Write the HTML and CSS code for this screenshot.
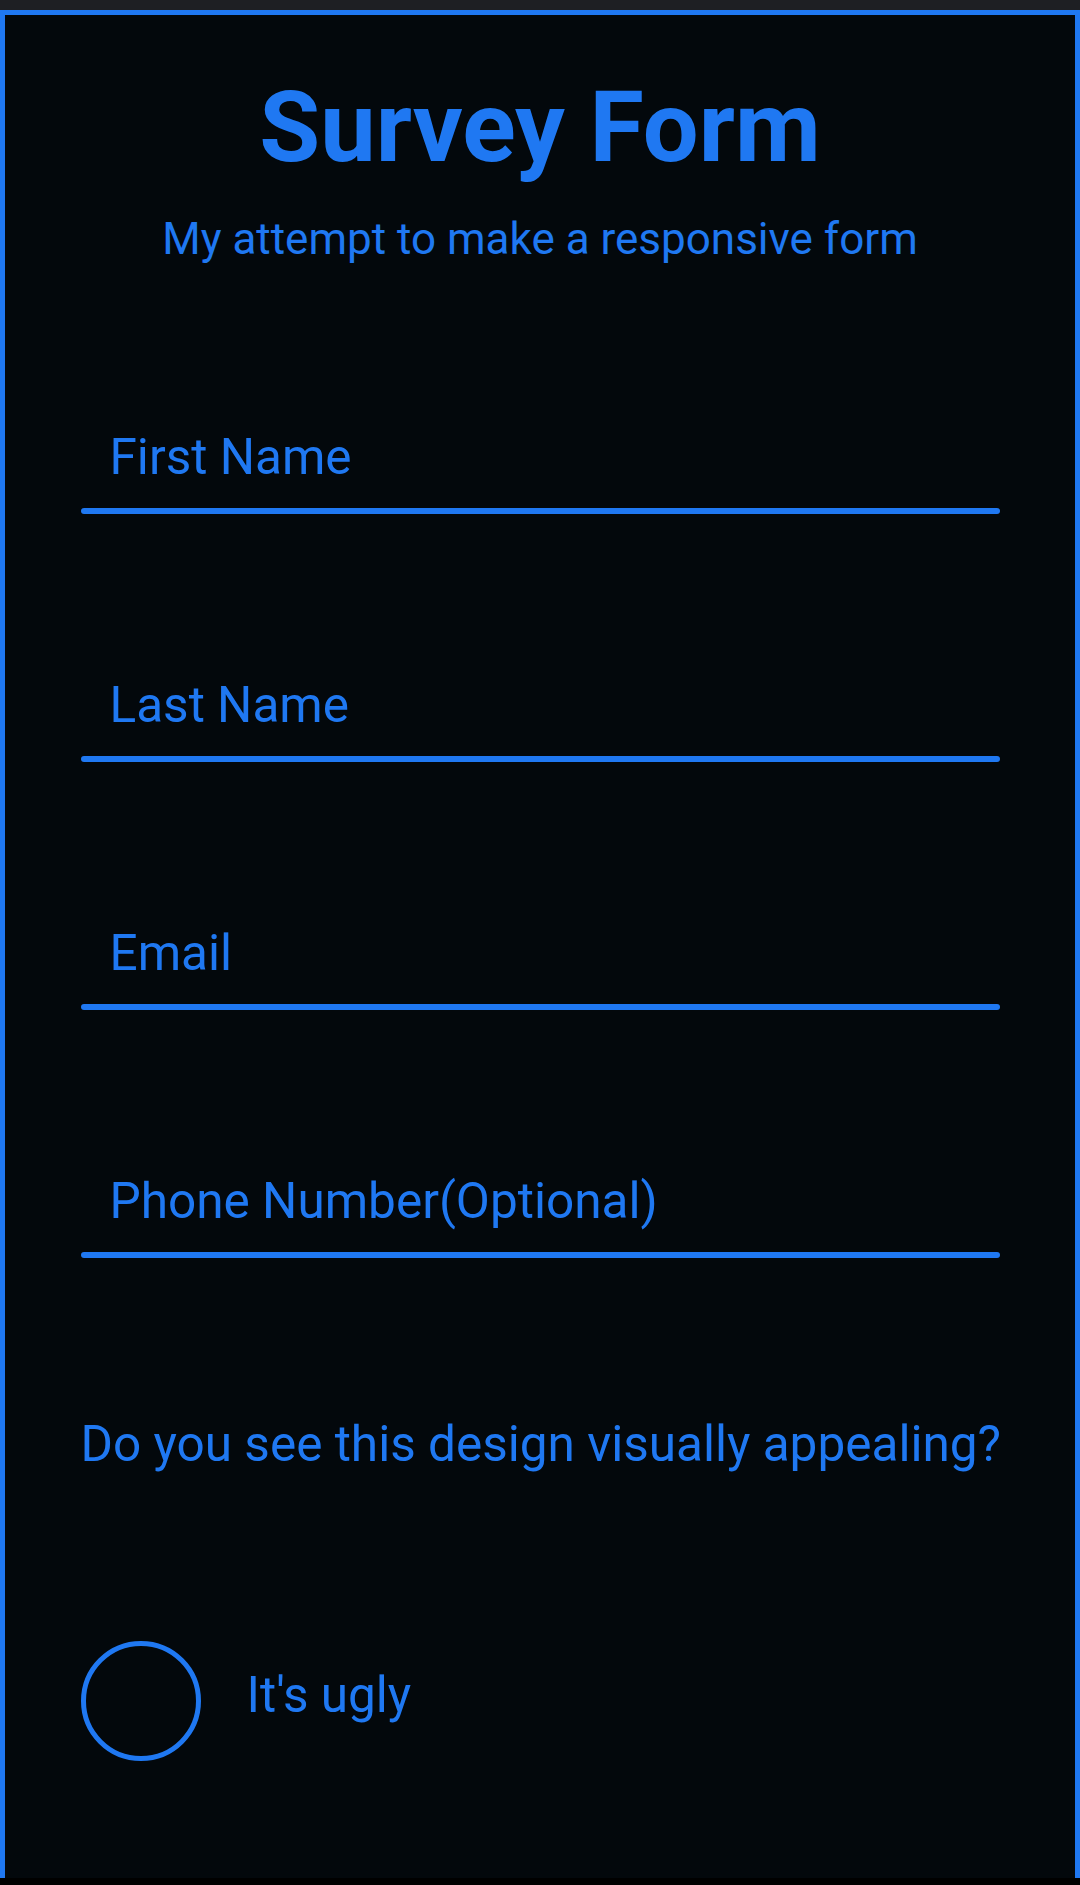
FILE: index.html
```html
<!DOCTYPE html>
<html lang="en">
<head>
<meta charset="utf-8">
<title>Survey Form</title>
<link rel="stylesheet" href="styles.css">
</head>
<body>
<div class="topbar"></div>
<main class="container">
  <h1 class="title">Survey Form</h1>
  <p class="subtitle">My attempt to make a responsive form</p>
  <form class="form">
    <div class="field"><input type="text" placeholder="First Name"></div>
    <div class="field"><input type="text" placeholder="Last Name"></div>
    <div class="field"><input type="email" placeholder="Email"></div>
    <div class="field"><input type="tel" placeholder="Phone Number(Optional)"></div>
    <p class="question">Do you see this design visually appealing?</p>
    <label class="option"><input type="radio" name="appeal"><span>It's ugly</span></label>
  </form>
</main>
</body>
</html>
```
FILE: styles.css
```css
* { box-sizing: border-box; }
html, body {
  margin: 0;
  padding: 0;
  background: #000;
}
body {
  font-family: Roboto, "Noto Sans", sans-serif;
  color: #1f78f2;
  height: 1885px;
  overflow: hidden;
}
.topbar {
  height: 10px;
  background: #1e1f23;
}
.container {
  height: 1868px;
  background: #03080c;
  border: 5px solid #1f78f2;
  border-bottom: none;
  overflow: hidden;
}
.title {
  margin: 63px 0 0;
  font-size: 99px;
  line-height: 1;
  font-weight: 700;
  text-align: center;
}
.subtitle {
  margin: 40px 0 0;
  font-size: 44px;
  line-height: 1;
  text-align: center;
}
.form {
  width: 919px;
  margin: 167px auto 0;
  display: flex;
  flex-direction: column;
}
.field {
  display: flex;
  flex-direction: column;
  margin-bottom: 162px;
}
.field input {
  height: 58px;
  padding: 0 0 0 29px;
  margin: 0 0 22px;
  border: none;
  background: transparent;
  font-family: inherit;
  font-size: 49.5px;
  color: #1f78f2;
  outline: none;
}
.field input::placeholder {
  color: #1f78f2;
  opacity: 1;
}
.field::after {
  content: "";
  height: 6px;
  border-radius: 3px;
  background: #1f78f2;
}
.question {
  margin: 0;
  font-size: 49.5px;
  line-height: 1;
  white-space: nowrap;
}
.option {
  margin-top: 171px;
  display: flex;
  align-items: center;
  gap: 46px;
  font-size: 49.5px;
}
.option input {
  appearance: none;
  -webkit-appearance: none;
  margin: 0;
  width: 120px;
  height: 120px;
  border: 5px solid #1f78f2;
  border-radius: 50%;
  background: transparent;
}
.option span {
  line-height: 1;
  padding-bottom: 10px;
}
```
